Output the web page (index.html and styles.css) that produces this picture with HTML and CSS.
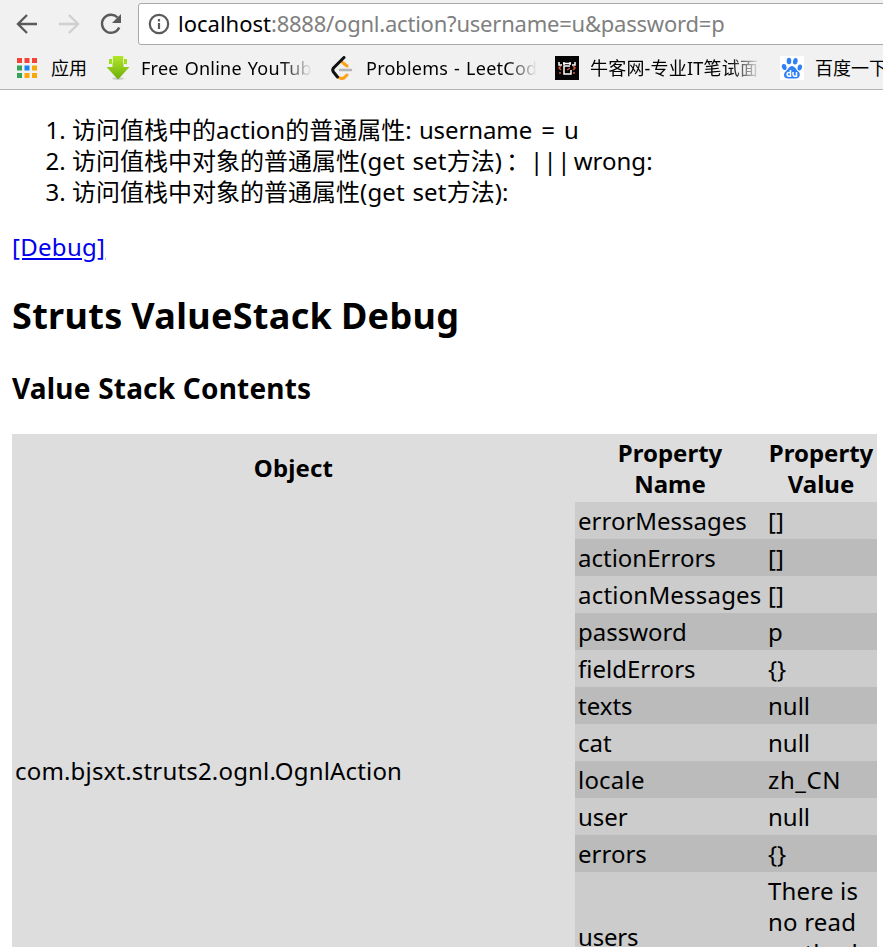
FILE: index.html
```html
<!DOCTYPE html>
<html lang="zh-CN">
<head>
<meta charset="utf-8">
<title>Struts ValueStack Debug</title>
<link rel="stylesheet" href="styles.css">
</head>
<body>
<header class="chrome">
  <div class="toolbar">
    <svg class="nav" viewBox="0 0 24 24"><path d="M22 12H3M12 3L3 12l9 9" /></svg>
    <svg class="nav off" viewBox="0 0 24 24"><path d="M2 12h19M12 3l9 9-9 9" /></svg>
    <svg class="nav" viewBox="0 0 24 24"><path d="M20.2 15.500A9 9 0 1 1 18.500 5.500" /><path class="solid" d="M22 2v9h-9z" /></svg>
    <div class="address">
      <svg class="info" viewBox="0 0 22 22"><circle cx="11" cy="11" r="9.200" /><path d="M11 10v6M11 6v2.500" /></svg>
      <span class="url"><b class="host">localhost</b><span class="rest">:8888/ognl.action?username=u&amp;password=p</span></span>
    </div>
  </div>
  <nav class="bookmarks">
    <a class="mark apps"><svg class="grid" viewBox="0 0 20 20"><path fill="#f44336" d="M0 0h5v5H0zM7.500 0h5v5h-5zM15 0h5v5h-5z"/><path fill="#34a25a" d="M0 7.500h5v5H0zM0 15h5v5H0z"/><path fill="#1a84f0" d="M7.500 7.500h5v5h-5z"/><path fill="#fba70b" d="M15 7.500h5v5h-5zM7.500 15h5v5h-5zM15 15h5v5h-5z"/></svg><span class="label">应用</span></a>
    <a class="mark video"><svg class="icon" viewBox="0 0 24 24"><defs><linearGradient id="lime" x2="0" y2="1"><stop stop-color="#b4e72c"/><stop offset="1" stop-color="#6cac08"/></linearGradient></defs><ellipse cx="12" cy="22.500" rx="6" ry="1.300" fill="#ccc"/><path fill="url(#lime)" d="M6.500 0h11v11H23.500L12 23.500.5 11h6z"/><path fill="#e6f5bd" d="M6 0h1v7H6zM17 0h1v7h-1z"/><path fill="#a0dc20" d="M3 3h3v5H3zM18 3h3v5h-3z"/></svg><span class="label fade roomy">Free Online YouTube</span></a>
    <a class="mark leet"><svg class="icon" viewBox="0 0 24 24"><path fill="none" stroke="#b3b3b3" stroke-width="2.500" stroke-linecap="round" d="M9 14h11"/><path fill="none" stroke="#ffa116" stroke-width="3" stroke-linecap="round" d="M11.500 6.500l4.500 3.500M8 21.500q3 2 5.500 0l2.500-2.500"/><path fill="none" stroke="#111" stroke-width="3" stroke-linecap="round" d="M13 1.500L2.500 12q-1.500 2 0 4l4 5"/></svg><span class="label fade roomy">Problems - LeetCode</span></a>
    <a class="mark niuke"><svg class="icon" viewBox="0 0 24 24"><path fill="#050505" d="M0 0h24v24H0z"/><path fill="none" stroke="#fff" stroke-width="1.500" d="M4 6v3h3M20 6v3h-3M8 7.500h8M9 6v3M15 6v3M15 10H9v8h7v-4"/><path fill="none" stroke="#d75a3c" stroke-width="1.500" d="M6 10l-2 2 2 2M18 10l2 2-2 2M5 16v2M19 16v2M15 12l-3 2"/></svg><span class="label fade cjk">牛客网-专业IT笔试面试</span></a>
    <a class="mark baidu"><svg class="icon" viewBox="0 0 24 24"><path fill="#fff" d="M0 0h24v24H0z"/><g fill="#2f80f7"><ellipse cx="4.200" cy="11" rx="2.300" ry="3.100" transform="rotate(-15 4.200 11)"/><ellipse cx="9" cy="5" rx="2.300" ry="3.300"/><ellipse cx="15.300" cy="5.300" rx="2.300" ry="3.300" transform="rotate(12 15.300 5.300)"/><ellipse cx="19.800" cy="11.500" rx="2.200" ry="3" transform="rotate(15 19.800 11.500)"/><path d="M12 10c3 0 4 4 7 6 2 3 0 6.500-3 6.500H8C4 22.500 3 19 5 16c3-2 4-6 7-6z"/></g><path fill="none" stroke="#fff" stroke-width="1.500" d="M10.500 14v6.200H9a1.800 1.800 0 0 1 0-3.800h1.500M13 16v2.500q0 1.700 1.500 1.700h2V16"/></svg><span class="label">百度一下，你就知道</span></a>
  </nav>
</header>
<main class="page">
  <ol class="notes">
    <li>访问值栈中的<span>action</span>的普通属性: <span class="pair">username = u</span></li>
    <li>访问值栈中对象的普通属性<span class="getset">(get set</span>方法)<span class="colon">：</span><span class="bars">| | |</span> <span class="wrong">wrong:</span></li>
    <li>访问值栈中对象的普通属性<span class="getset">(get set</span>方法):</li>
  </ol>
  <a class="debug" href="#debug">[Debug]</a>
  <h2 class="title">Struts ValueStack Debug</h2>
  <h3 class="subtitle">Value Stack Contents</h3>
  <table class="stack">
    <colgroup><col class="c-object"><col class="c-name"><col class="c-value"></colgroup>
    <tr><th class="head">Object</th><th>Property<br>Name</th><th>Property<br>Value</th></tr>
    <tr class="odd"><td class="object" rowspan="12">com.bjsxt.struts2.ognl.OgnlAction</td><td>errorMessages</td><td>[]</td></tr>
    <tr class="even"><td>actionErrors</td><td>[]</td></tr>
    <tr class="odd"><td class="wide">actionMessages</td><td>[]</td></tr>
    <tr class="even"><td>password</td><td>p</td></tr>
    <tr class="odd"><td>fieldErrors</td><td>{}</td></tr>
    <tr class="even"><td>texts</td><td>null</td></tr>
    <tr class="odd"><td>cat</td><td>null</td></tr>
    <tr class="even"><td class="wide">locale</td><td class="code">zh_CN</td></tr>
    <tr class="odd"><td>user</td><td>null</td></tr>
    <tr class="even"><td>errors</td><td>{}</td></tr>
    <tr class="odd"><td class="tall">users</td><td class="wide">There is<br>no read<br>method<br>for users</td></tr>
    <tr class="even"><td>username</td><td>u</td></tr>
  </table>
</main>
</body>
</html>
```

FILE: styles.css
```css
* { box-sizing: border-box; }
html, body { height: 100%; }
body {
  margin: 0;
  overflow: hidden;
  background: #fff;
  color: #000;
  font: 24px/31px "Noto Sans", "Noto Sans CJK SC", sans-serif;
  white-space: nowrap;
}
.chrome {
  height: 90px;
  background: #f1f1f1;
  border-bottom: 1px solid #b4b4b4;
  overflow: hidden;
}
.toolbar { display: flex; align-items: center; height: 48px; padding-left: 15px; }
.nav {
  flex: none;
  width: 24px;
  height: 24px;
  margin-right: 18px;
  fill: none;
  stroke: #5a5a5a;
  stroke-width: 2.4;
}
.nav.off { stroke: #d0d0d0; }
.nav .solid { fill: #5a5a5a; stroke: none; }
.address {
  display: flex;
  align-items: center;
  flex: 1;
  height: 42px;
  margin: 0 -6px 0 -3px;
  padding-left: 9px;
  background: #fff;
  border: 1px solid #a9a9a9;
  border-radius: 3px;
}
.info { width: 22px; height: 22px; margin-right: 8px; fill: none; stroke: #5a5a5a; stroke-width: 2.2; }
.url { padding-bottom: 1px; font-size: 22px; }
.host { font-weight: 400; }
.rest { color: #808080; letter-spacing: -0.22px; }
.bookmarks { display: flex; align-items: center; height: 40px; font-size: 18px; line-height: 26px; }
.mark { display: flex; align-items: center; flex: none; }
.apps { width: 106px; padding-left: 17px; }
.video { width: 225px; }
.leet { width: 224px; }
.niuke { width: 225px; }
.grid { width: 20px; height: 20px; margin-right: 14px; }
.icon { width: 24px; height: 24px; margin-right: 11px; }
.label { overflow: hidden; }
.roomy { letter-spacing: 0.25px; word-spacing: 1px; }
.cjk { letter-spacing: 0.2px; }
.fade { width: 171px; -webkit-mask-image: linear-gradient(90deg, #000 140px, transparent); mask-image: linear-gradient(90deg, #000 140px, transparent); }
.page { padding: 24px 6px 0 12px; }
.notes { margin: 0 0 24px; padding-left: 60px; }
.pair { margin-left: 1px; letter-spacing: -0.1px; word-spacing: 3px; }
.getset { letter-spacing: 0.2px; word-spacing: 1px; }
.colon { margin-left: 4px; }
.bars { word-spacing: -5.8px; }
.wrong { margin-left: -3px; }
.debug { display: block; width: max-content; color: #0000ee; letter-spacing: 0.3px; text-decoration: underline; }
.title { margin: 30px 0 31px; font-size: 36px; line-height: 47px; letter-spacing: 0.32px; word-spacing: -1px; }
.subtitle { margin: 0 0 28px; font-size: 28px; line-height: 36px; letter-spacing: 0.2px; }
.stack { width: 865px; table-layout: fixed; border-collapse: collapse; background: #ddd; }
.c-object { width: 563px; }
.c-name { width: 190px; }
.c-value { width: 112px; }
th, td { padding: 3px; text-align: left; vertical-align: middle; }
th { text-align: center; font-weight: 700; }
.head { padding-bottom: 5px; letter-spacing: 0.15px; }
.odd { background: #ccc; }
.even { background: #bbb; }
.object { background: #ddd; letter-spacing: 0.17px; }
.wide { letter-spacing: 0.2px; }
.tall { padding-bottom: 5px; letter-spacing: -0.2px; }
.code { letter-spacing: 0.6px; }
```
